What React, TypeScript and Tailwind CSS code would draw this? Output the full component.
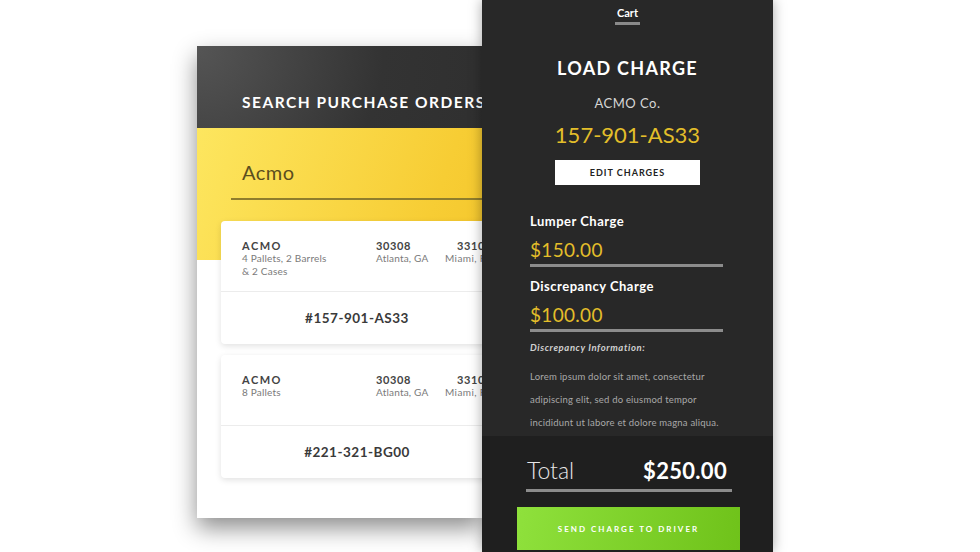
import React from 'react';

interface Order {
  name: string;
  items: string[];
  fromZip: string;
  fromCity: string;
  toZip: string;
  toCity: string;
  number: string;
}

const orders: Order[] = [
  {
    name: 'ACMO',
    items: ['4 Pallets, 2 Barrels', '& 2 Cases'],
    fromZip: '30308',
    fromCity: 'Atlanta, GA',
    toZip: '33101',
    toCity: 'Miami, FL',
    number: '#157-901-AS33',
  },
  {
    name: 'ACMO',
    items: ['8 Pallets'],
    fromZip: '30308',
    fromCity: 'Atlanta, GA',
    toZip: '33101',
    toCity: 'Miami, FL',
    number: '#221-321-BG00',
  },
];

const OrderCard: React.FC<{ order: Order }> = ({ order }) => (
  <div className="w-[272px] bg-white rounded-[4px] shadow-[0_2px_6px_rgba(0,0,0,0.12)]">
    <div className="h-[71px] flex pl-[21px] pt-[18px] border-b border-[#ececec]">
      <div className="w-[134px] shrink-0">
        <div className="text-[11px] leading-[13px] font-bold tracking-[1.5px] text-[#444]">{order.name}</div>
        {order.items.map(line => (
          <div key={line} className="text-[10px] leading-[13px] tracking-[0.2px] text-[#7a7a7a]">{line}</div>
        ))}
      </div>
      <div className="w-[69px] shrink-0">
        <div className="text-[11px] leading-[13px] font-bold tracking-[0.6px] text-[#444]">{order.fromZip}</div>
        <div className="text-[10px] leading-[13px] tracking-[0.2px] text-[#7a7a7a]">{order.fromCity}</div>
      </div>
      <div className="shrink-0 w-[72px] whitespace-nowrap">
        <div className="pl-[12px] text-[11px] leading-[13px] font-bold tracking-[0.6px] text-[#444]">{order.toZip}</div>
        <div className="text-[10px] leading-[13px] tracking-[0.4px] text-[#7a7a7a]">{order.toCity}</div>
      </div>
    </div>
    <div className="h-[52px] flex items-center justify-center text-[13.5px] font-bold tracking-[0.5px] text-[#3a3a3a]">
      {order.number}
    </div>
  </div>
);

const SearchPanel: React.FC = () => (
  <div className="w-[285px] h-[472px] mt-[46px] shrink-0 overflow-hidden bg-white shadow-[0_10px_22px_rgba(0,0,0,0.45)]">
    <div className="w-[330px]">
      <div className="h-[82px] flex items-end pb-[16px] pl-[45px] bg-[radial-gradient(circle_at_0%_0%,#555555,#333333_55%,#2e2e2e)]">
        <span className="text-[15.5px] leading-[20px] font-bold tracking-[1.5px] text-white whitespace-nowrap">
          SEARCH PURCHASE ORDERS
        </span>
      </div>
      <div className="h-[132px] pl-[34px] pt-[30px] bg-[linear-gradient(110deg,#fde65f,#f7cd34_70%,#f3c42a)]">
        <div className="h-[42px] border-b-2 border-[#8f7d2c] flex items-start pl-[11px]">
          <span className="text-[20px] leading-[28px] text-[#5b4e1e] tracking-[0.5px]">Acmo</span>
        </div>
      </div>
      <div className="-mt-[39px] pl-[24px] flex flex-col gap-[11px]">
        {orders.map(o => (
          <OrderCard key={o.number} order={o} />
        ))}
      </div>
    </div>
  </div>
);

const ChargeField: React.FC<{ label: string; amount: string; className?: string }> = ({ label, amount, className }) => (
  <div className={className}>
    <div className="text-[13px] leading-[16px] font-bold tracking-[0.5px] text-white">{label}</div>
    <div className="mt-[10px] text-[19px] leading-[22px] tracking-[0.3px] text-[#e3be2a]">{amount}</div>
    <div className="mt-[3px] w-[193px] h-[3px] bg-[#8c8c8c]" />
  </div>
);

const ChargePanel: React.FC = () => (
  <div className="relative z-10 w-[291px] h-[552px] shrink-0 flex flex-col bg-[#282828] shadow-[0_0_12px_rgba(0,0,0,0.35)]">
    <div className="flex flex-col items-center pt-[6px]">
      <span className="text-[11px] leading-[14px] font-bold text-white">Cart</span>
      <div className="mt-[2px] w-[25px] h-[3px] bg-[#8a8a8a]" />
    </div>
    <div className="mt-[32px] text-center text-[18px] leading-[22px] font-bold tracking-[1.3px] text-white">LOAD CHARGE</div>
    <div className="mt-[16px] text-center text-[13px] leading-[16px] text-[#d6d6d6] tracking-[0.5px]">ACMO Co.</div>
    <div className="mt-[11px] text-center text-[22px] leading-[26px] text-[#e3be2a]">157-901-AS33</div>
    <div className="mt-[12px] flex justify-center">
      <div className="w-[145px] h-[25px] bg-white flex items-center justify-center text-[9px] font-bold tracking-[1px] text-[#222]">
        EDIT CHARGES
      </div>
    </div>
    <div className="pl-[48px]">
      <ChargeField className="mt-[28px]" label="Lumper Charge" amount="$150.00" />
      <ChargeField className="mt-[11px]" label="Discrepancy Charge" amount="$100.00" />
      <div className="mt-[10px] text-[9.5px] leading-[12px] italic font-bold tracking-[0.6px] text-[#d0d0d0]">
        Discrepancy Information:
      </div>
      <div className="mt-[11px] w-[200px] text-[9.5px] leading-[23px] text-[#a8a8a8] tracking-[0.2px]">
        Lorem ipsum dolor sit amet, consectetur adipiscing elit, sed do eiusmod tempor incididunt ut labore et dolore magna aliqua.
      </div>
    </div>
    <div className="mt-auto h-[116px] bg-[#1f1f1f] flex flex-col pt-[20px]">
      <div className="ml-[44px] w-[206px]">
        <div className="flex items-center justify-between h-[28px]">
          <span className="text-[23px] font-light text-[#e8e8e8] pl-[1px]">Total</span>
          <span className="text-[22px] font-bold text-white tracking-[0.3px] pr-[5px]">$250.00</span>
        </div>
        <div className="mt-[5px] h-[3px] bg-[#8c8c8c]" />
      </div>
      <div className="ml-[35px] mt-[15px] w-[223px] h-[43px] bg-[linear-gradient(100deg,#8fe13c,#6fc21a)] flex items-center justify-center text-[8px] font-bold tracking-[2px] text-white">
        SEND CHARGE TO DRIVER
      </div>
    </div>
  </div>
);

export default function App() {
  return (
    <div className="w-[980px] h-[552px] bg-white flex overflow-hidden font-['Lato',sans-serif]">
      <div className="w-[197px] shrink-0" />
      <SearchPanel />
      <ChargePanel />
    </div>
  );
}
